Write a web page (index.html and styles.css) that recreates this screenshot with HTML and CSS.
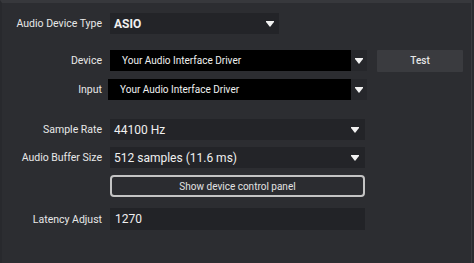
FILE: index.html
```html
<!DOCTYPE html>
<html>
<head>
<meta charset="utf-8">
<link rel="stylesheet" href="styles.css">
</head>
<body>
<div class="panel">
  <div class="row r-type">
    <div class="label">Audio Device Type</div>
    <div class="select short"><span class="val bold">ASIO</span><span class="arrow"></span></div>
  </div>
  <div class="row r-device">
    <div class="label">Device</div>
    <div class="select black"><span class="val small">Your Audio Interface Driver</span><span class="arrowbox"><span class="arrow"></span></span></div>
    <button class="test">Test</button>
  </div>
  <div class="row r-input">
    <div class="label">Input</div>
    <div class="select black shift"><span class="val small">Your Audio Interface Driver</span><span class="arrowbox"><span class="arrow"></span></span></div>
  </div>
  <div class="row r-rate">
    <div class="label">Sample Rate</div>
    <div class="select"><span class="val">44100 Hz</span><span class="arrow"></span></div>
  </div>
  <div class="row r-buf">
    <div class="label">Audio Buffer Size</div>
    <div class="select"><span class="val">512 samples (11.6 ms)</span><span class="arrow"></span></div>
  </div>
  <div class="row r-show">
    <div class="label"></div>
    <button class="show">Show device control panel</button>
  </div>
  <div class="row r-lat">
    <div class="label">Latency Adjust</div>
    <div class="field"><span class="val">1270</span></div>
  </div>
</div>
</body>
</html>
```
FILE: styles.css
```css
html, body {
  margin: 0;
  padding: 0;
  background: #2b2c30;
}
body {
  width: 474px;
  height: 263px;
  overflow: hidden;
  font-family: Roboto, "Liberation Sans", sans-serif;
  color: #e4e4e4;
}
.panel {
  box-sizing: border-box;
  width: 472px;
  height: 263px;
  border-top: 3px solid #37383c;
  border-left: 2px solid #28292d;
  border-right: 1px solid #3a3b3f;
  background: #2c2d31;
  display: flex;
  flex-direction: column;
}
.row {
  display: flex;
  align-items: center;
  height: 21px;
}
.label {
  width: 100px;
  flex: none;
  text-align: right;
  font-size: 10.5px;
  color: #e8e8e8;
  margin-right: 8px;
}
.r-type { margin-top: 10px; }
.r-device { margin-top: 16px; }
.r-input { margin-top: 8px; }
.r-rate { margin-top: 19px; }
.r-buf { margin-top: 7px; }
.r-show { margin-top: 7px; height: 22px; }
.r-lat { margin-top: 11px; height: 22px; }

.select {
  box-sizing: border-box;
  width: 255px;
  height: 21px;
  background: #232428;
  display: flex;
  align-items: center;
  justify-content: space-between;
  padding: 0 6px 0 4px;
}
.select.short { width: 169px; padding-right: 5px; }
.select.black {
  background: #000;
  padding: 0;
  width: 257px;
}
.select.black.shift { margin-left: -2px; width: 259px; }
.select.black .val { padding-left: 12px; }
.arrowbox {
  width: 16px;
  height: 21px;
  background: #26272b;
  display: flex;
  align-items: center;
  justify-content: center;
}
.val {
  font-size: 12px;
  color: #f0f0f0;
  white-space: nowrap;
}
.val.bold { font-weight: 700; font-size: 12px; }
.val.small { font-size: 10px; }
.arrow {
  width: 0;
  height: 0;
  border-left: 4px solid transparent;
  border-right: 4px solid transparent;
  border-top: 5px solid #f2f2f2;
  position: relative;
  top: 1px;
}
.arrow::before {
  content: "";
  position: absolute;
  left: -4px;
  top: -6px;
  width: 8px;
  height: 1px;
  background: #f2f2f2;
}
.test {
  margin-left: 10px;
  width: 86px;
  height: 22px;
  background: #3a3b3f;
  border: none;
  border-radius: 1px;
  color: #e6e6e6;
  font-family: Roboto, "Liberation Sans", sans-serif;
  font-size: 10px;
  font-weight: 500;
  padding: 0;
}
.show {
  box-sizing: border-box;
  width: 255px;
  height: 22px;
  background: #2b2c30;
  border: 2px solid #c4c4c4;
  border-radius: 4px;
  color: #e2e2e2;
  font-family: Roboto, "Liberation Sans", sans-serif;
  font-size: 10px;
  padding: 0;
}
.field {
  box-sizing: border-box;
  width: 255px;
  height: 22px;
  background: #222327;
  display: flex;
  align-items: center;
  padding-left: 5px;
}
```
